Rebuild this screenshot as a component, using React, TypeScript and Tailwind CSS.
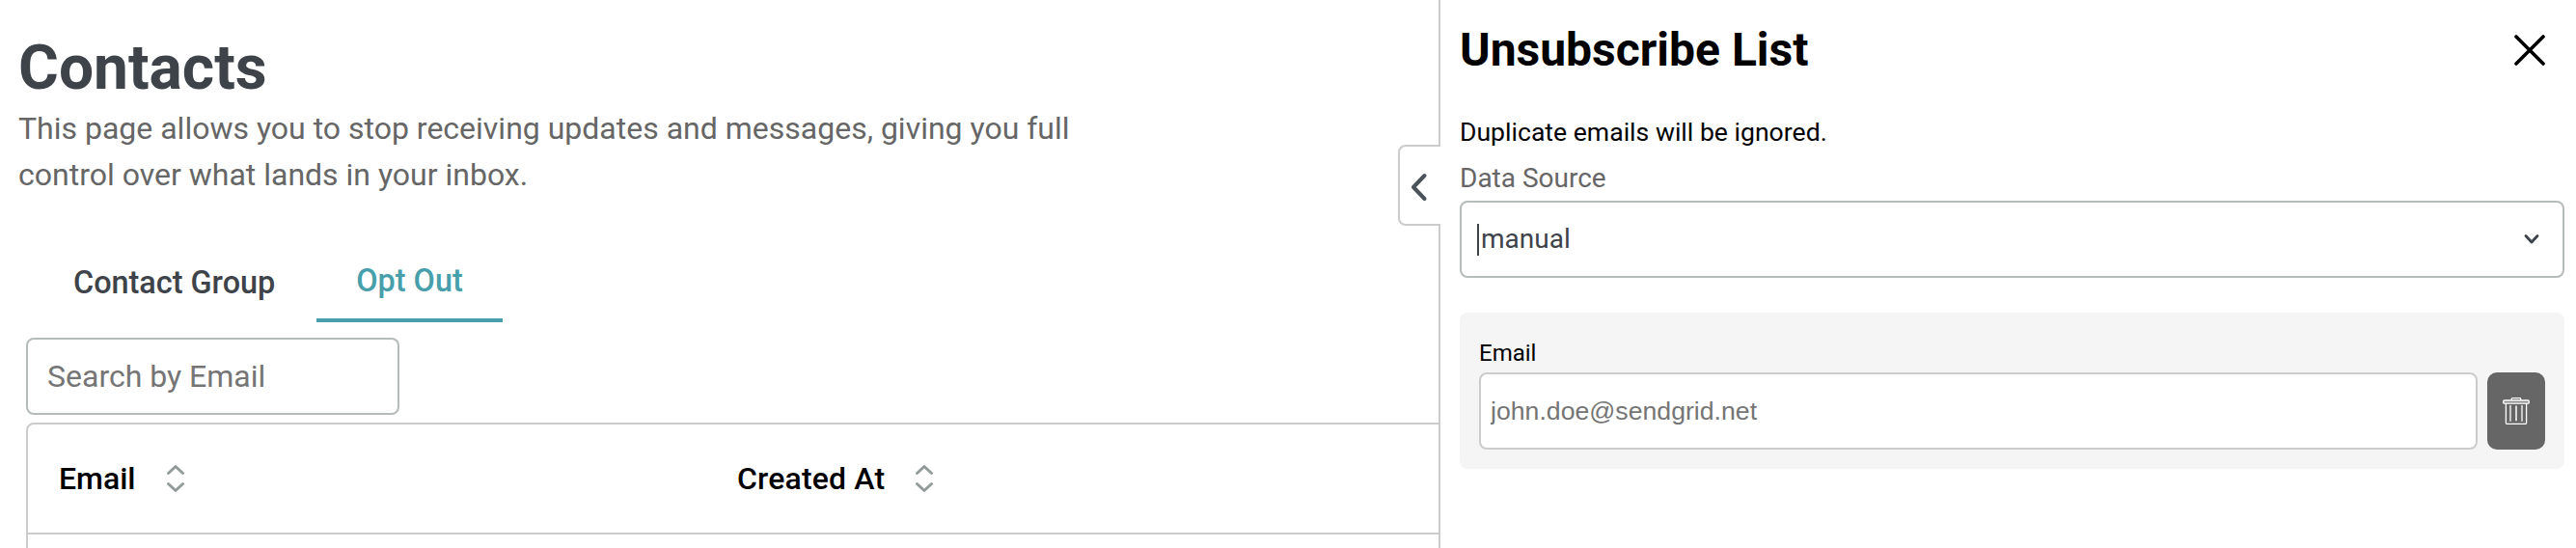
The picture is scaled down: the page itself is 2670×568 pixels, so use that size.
import { useState } from "react"

const columns = [
  { label: "Email", className: "w-[703px]" },
  { label: "Created At", className: "w-[700px] tracking-[0.15px]" },
]

const tabs = ["Contact Group", "Opt Out"]

function SortIcon() {
  return (
    <svg width="20" height="30" viewBox="0 0 20 30" fill="none" stroke="#929b9a" strokeWidth="3" strokeLinecap="round" strokeLinejoin="round">
      <path d="M2.5 9.5 10 2.5l7.5 7" />
      <path d="M2.5 20.5 10 27.5l7.5-7" />
    </svg>
  )
}

function TrashIcon() {
  return (
    <svg width="28" height="28" viewBox="0 0 28 28" fill="none" stroke="#fff" strokeWidth="1.3" strokeLinejoin="round">
      <path d="M9.3 3V1.4c0-.4.3-.7.7-.7h8c.4 0 .7.3.7.7V3" />
      <rect x=".7" y="3" width="26.6" height="3.2" rx="1" fill="#8a8a8a" />
      <path d="M3.4 6.2v20c0 .6.4 1.1 1.1 1.1h19c.6 0 1.1-.5 1.1-1.1v-20" />
      <path d="M8 8.5v15.8M20 8.5v15.8" strokeLinecap="round" />
      <path d="M14 8.5v15.8" strokeWidth="2" stroke="#d8d8d8" />
    </svg>
  )
}

export default function App() {
  const [activeTab, setActiveTab] = useState("Opt Out")

  return (
    <div className="flex h-[568px] w-[2670px] overflow-hidden bg-white font-['Roboto',sans-serif]">
      <main className="w-[1491px] shrink-0 overflow-hidden pt-[33px]">
        <h1 className="pl-[19px] text-[64px] leading-[76px] font-bold text-[#3e434a]">Contacts</h1>
        <p className="ml-[19px] w-[1120px] text-[32px] leading-[48px] text-[#666]">
          This page allows you to stop receiving updates and messages, giving you full control over what lands in your inbox.
        </p>

        <nav className="mt-[46px] ml-[35px] flex h-[83px] gap-0.5">
          {tabs.map((tab) => (
            <button
              key={tab}
              onClick={() => setActiveTab(tab)}
              className={`px-[41px] pt-0.5 text-[32.4px] font-medium ${activeTab === tab ? "border-b-4 border-[#479fab] text-[#479fab]" : "text-[#3e434a]"}`}
            >
              {tab}
            </button>
          ))}
        </nav>

        <input
          placeholder="Search by Email"
          className="mt-4 ml-[27px] block h-20 w-[387px] rounded-lg border-2 border-[#b5bcba] px-5 text-[32px] placeholder:text-[#757575]"
        />

        <div className="mt-2 ml-[27px] h-[200px] w-[1600px] rounded-tl-lg border-2 border-[#ccc]">
          <div className="flex h-[114px] items-center border-b-2 border-[#ccc] pl-8">
            {columns.map((col) => (
              <div key={col.label} className={`flex items-center gap-[31px] text-[32px] font-medium text-black ${col.className}`}>
                {col.label}
                <SortIcon />
              </div>
            ))}
          </div>
        </div>
      </main>

      <aside className="relative flex-1 border-l-2 border-[#ccc] pt-[23px] pr-3 pl-5">
        {/* Collapse handle sits over the panel's edge */}
        <button className="absolute top-[150px] -left-[44px] flex h-[84px] w-11 items-center rounded-l-lg border-2 border-r-0 border-[#ccc] bg-white pt-1 pl-[11px]">
          <svg width="18" height="30" viewBox="0 0 18 30" fill="none" stroke="#4b5259" strokeWidth="4" strokeLinecap="round" strokeLinejoin="round">
            <path d="M14.5 3 3 15l11.5 12" />
          </svg>
        </button>

        <div className="flex h-[58px] items-center justify-between pr-5">
          <h2 className="text-[48px] leading-[58px] font-bold text-black">Unsubscribe List</h2>
          <svg width="32" height="32" viewBox="0 0 32 32" stroke="#000" strokeWidth="3.6" strokeLinecap="round">
            <path d="m2 2 28 28M30 2 2 30" />
          </svg>
        </div>

        <p className="mt-[32px] text-[26.6px] leading-[48px] text-black">Duplicate emails will be ignored.</p>
        <div className="text-[28px] leading-[47px] text-[#666]">Data Source</div>

        <div className="flex h-20 items-center rounded-lg border-2 border-[#b5bcba] pr-6 pl-4">
          <span className="h-[33px] w-0.5 bg-[#3e434a]" />
          <span className="ml-0.5 flex-1 text-[28px] text-[#3e434a]">manual</span>
          <svg width="16" height="12" viewBox="0 0 16 12" fill="none" stroke="#3e434a" strokeWidth="2.8" strokeLinecap="round" strokeLinejoin="round">
            <path d="m2 2.5 6 6.5 6-6.5" />
          </svg>
        </div>

        <div className="mt-9 h-[162px] rounded-lg bg-[#f5f5f5] px-5 pt-6">
          <label className="block h-[38px] text-[24px] leading-[36px] text-black">Email</label>
          <div className="flex gap-2.5">
            <input
              placeholder="john.doe@sendgrid.net"
              className="h-20 min-w-0 flex-1 rounded-lg border-2 border-[#ccc] bg-white px-2.5 font-['Liberation_Sans',Arial,sans-serif] text-[26.66px] placeholder:text-[#757575]"
            />
            <button className="flex h-20 w-[60px] items-center justify-center rounded-[10px] bg-[#666]">
              <TrashIcon />
            </button>
          </div>
        </div>
      </aside>
    </div>
  )
}
